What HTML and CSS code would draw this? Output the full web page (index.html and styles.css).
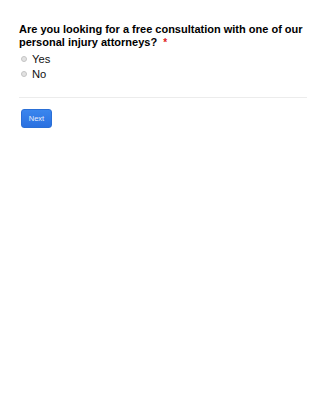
FILE: index.html
```html
<!DOCTYPE html>
<html lang="en">
<head>
    <meta charset="UTF-8">
    <meta name="viewport" content="width=device-width, initial-scale=1.0">
    <title>Consultation</title>
    <link rel="stylesheet" href="styles.css">
</head>
<body>
    <form class="form">
        <div class="question">
            <h2 class="question-label">Are you looking for a free consultation with one of our personal injury attorneys? <span class="required">*</span></h2>
            <div class="options">
                <label class="option"><span class="radio"></span>Yes</label>
                <label class="option"><span class="radio"></span>No</label>
            </div>
        </div>

        <div class="form-footer">
            <button type="button" class="next-btn">Next</button>
        </div>
    </form>
</body>
</html>
```

FILE: styles.css
```css
* {
    margin: 0;
    padding: 0;
    box-sizing: border-box;
}

body {
    font-family: "Liberation Sans", Arial, sans-serif;
    background: white;
    color: #000;
}

.form {
    padding: 23px 18px 0 19px;
}

.question {
    padding-bottom: 15px;
    border-bottom: 1px solid #ececec;
}

.question-label {
    font-size: 11px;
    font-weight: 700;
    line-height: 13px;
    color: #000;
}

.required {
    color: #e02020;
    font-size: 10px;
    margin-left: 3px;
}

.options {
    margin-top: 3px;
    display: flex;
    flex-direction: column;
}

.option {
    display: flex;
    align-items: center;
    font-size: 11.2px;
    line-height: 15px;
    color: #111;
}

.radio {
    width: 6px;
    height: 6px;
    border-radius: 50%;
    background: #e2e2e2;
    border: 1px solid #c4c4c4;
    margin: -1px 5px 0 2px;
}

.form-footer {
    padding-top: 11px;
}

.next-btn {
    display: block;
    margin-left: 2px;
    width: 31px;
    height: 19px;
    border: 1px solid #2a6fd6;
    border-radius: 3px;
    background: linear-gradient(#3a86ee, #2a70e0);
    color: #e6eefc;
    font-family: "Liberation Sans", Arial, sans-serif;
    font-size: 7.5px;
    cursor: pointer;
}
```
